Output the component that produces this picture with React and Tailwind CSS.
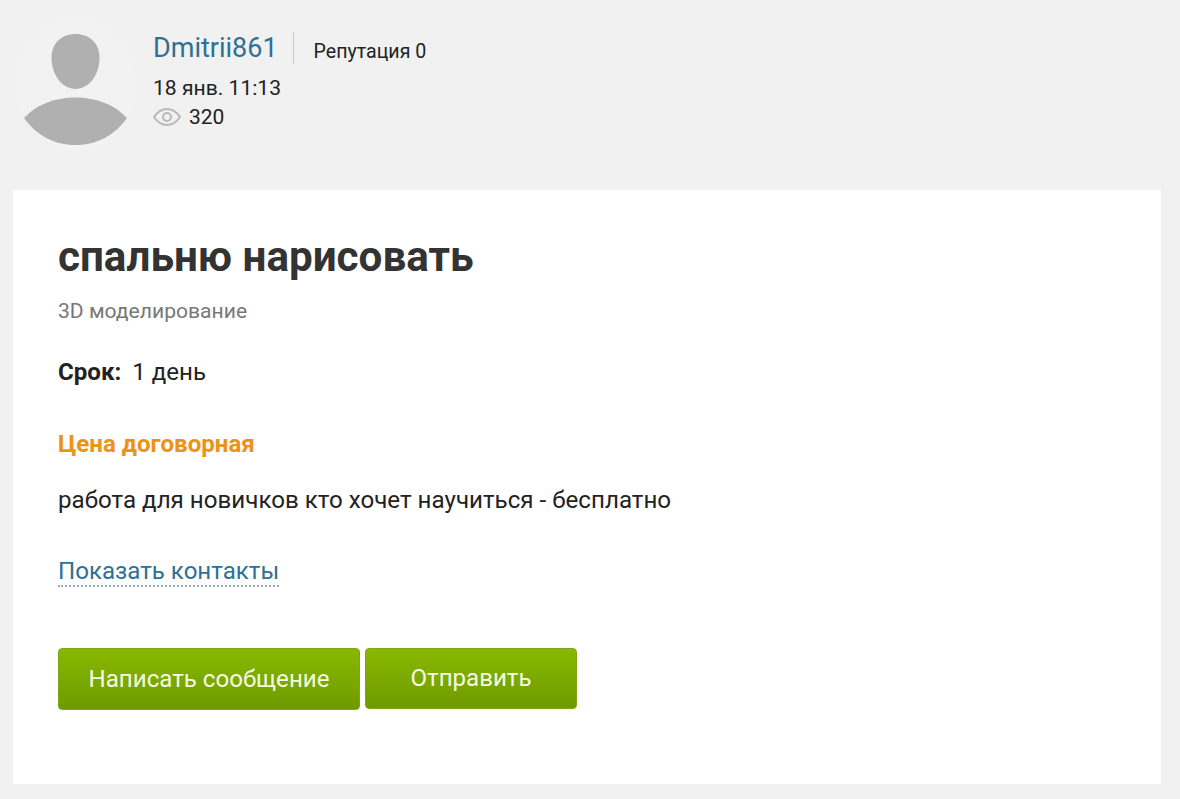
export default function App() {
  return (
    <div className="min-h-[799px] bg-[#f1f1f1] font-['Roboto',sans-serif] text-[#222]">
      <header className="flex h-[190px] items-start pl-4 pt-5">
        <div className="h-[130px] w-[120px] shrink-0 rounded-full bg-[#f2f2f2]">
          <svg viewBox="0 0 120 130" className="h-[130px] w-[120px]">
            <path d="M59.5 14c14 0 24 9 24 24 0 17-11 31-24 31S35.500 55 35.500 38c0-15 10-24 24-24z" fill="#b0b0b0" />
            <path d="M8 98C20 85 38 77.500 59.500 77.500S99 85 111 98c-12 17-30 27-51.500 27S20 115 8 98z" fill="#b0b0b0" />
          </svg>
        </div>
        <div className="ml-[17px] flex flex-col">
          <div className="mt-3 flex h-[32px] items-center">
            <a className="text-[27px] leading-[32px] text-[#2e7096]">Dmitrii861</a>
            <span className="ml-[15px] h-[32px] w-px bg-[#c8c8c8]" />
            <span className="relative top-[4px] ml-5 text-[19.6px] leading-[24px] text-[#222]">Репутация 0</span>
          </div>
          <div className="mt-[12px] text-[21.100px] leading-[24px]">18 янв. 11:13</div>
          <div className="mt-[5px] flex items-center text-[21px] leading-[24px]">
            <svg viewBox="0 0 28 20" className="mr-2 h-[20px] w-[28px]" fill="none" stroke="#b9b9b9" strokeWidth="2">
              <path d="M1 10C5 4 9 2 14 2s9 2 13 8c-4 6-8 8-13 8S5 16 1 10z" />
              <circle cx="14" cy="10" r="4" />
            </svg>
            320
          </div>
        </div>
      </header>
      <main className="mx-[13px] h-[594px] w-[1148px] bg-white pl-[45px] pt-[42px]">
        <h1 className="text-[42.200px] font-bold leading-[50px] text-[#333]">спальню нарисовать</h1>
        <div className="mt-[17px] text-[21.100px] leading-[24px] text-[#777]">3D моделирование</div>
        <div className="mt-[35px] flex text-[24.100px] leading-[28px]">
          <b className="font-bold">Срок:</b>
          <span className="ml-[11px]">1 день</span>
        </div>
        <div className="mt-[44px] text-[24.100px] font-bold leading-[28px] text-[#ee9213]">Цена договорная</div>
        <p className="mt-[28px] text-[24.150px] leading-[28px]">работа для новичков кто хочет научиться - бесплатно</p>
        <a className="mt-[43px] inline-block border-b-2 border-dotted border-[#9ab] text-[24.100px] leading-[28px] text-[#2e7096]">Показать контакты</a>
        <div className="mt-[61px] flex items-start gap-[5px]">
          <button className="h-[62px] w-[302px] rounded-[4px] border border-[#7ea51a] bg-gradient-to-b from-[#88b800] to-[#6f9a00] text-[24.100px] text-[#f5fbe0]">Написать сообщение</button>
          <button className="h-[61px] w-[212px] rounded-[4px] border border-[#7ea51a] bg-gradient-to-b from-[#88b800] to-[#6f9a00] text-[24.100px] text-[#f5fbe0]">Отправить</button>
        </div>
      </main>
    </div>
  );
}
